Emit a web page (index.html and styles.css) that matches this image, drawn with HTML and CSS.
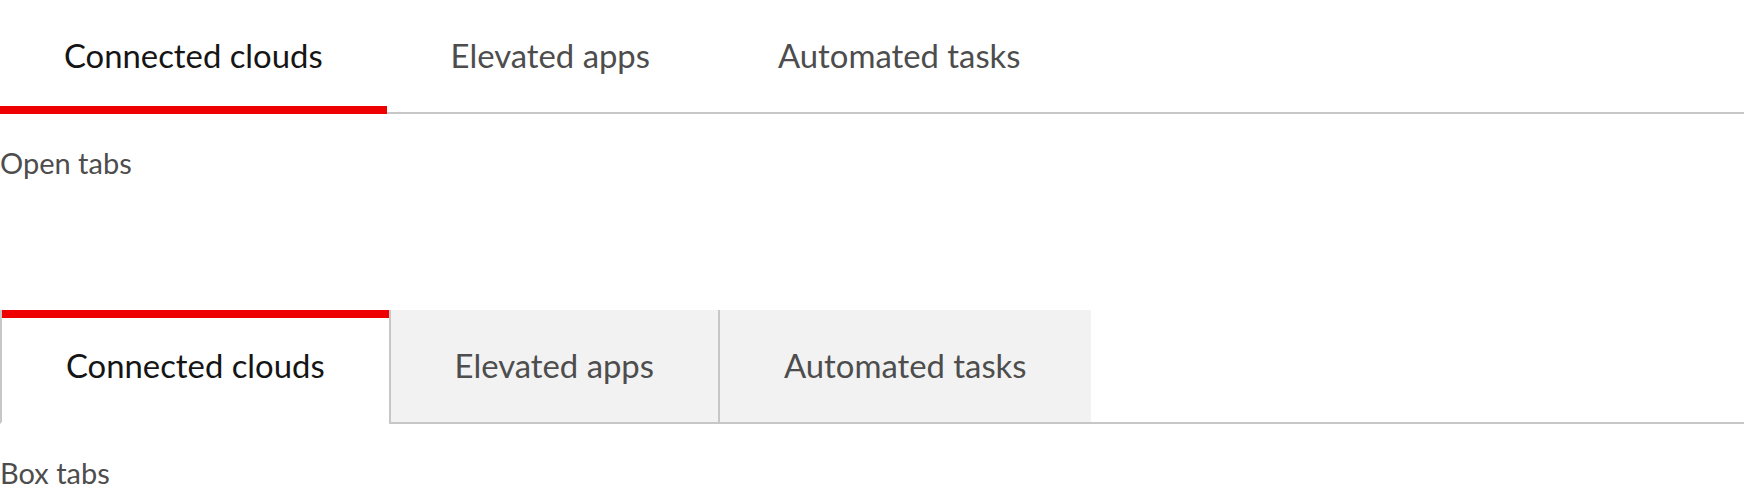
FILE: index.html
```html
<!DOCTYPE html>
<html lang="en">
<head>
<meta charset="utf-8">
<title>Tabs</title>
<link rel="stylesheet" href="styles.css">
</head>
<body>
  <section class="demo demo-open">
    <div class="tabs tabs-open" role="tablist">
      <button class="tab is-active" role="tab" aria-selected="true">Connected clouds</button>
      <button class="tab" role="tab">Elevated apps</button>
      <button class="tab" role="tab">Automated tasks</button>
    </div>
    <p class="label">Open tabs</p>
  </section>
  <section class="demo demo-box">
    <div class="tabs tabs-box" role="tablist">
      <button class="tab is-active" role="tab" aria-selected="true">Connected clouds</button>
      <button class="tab" role="tab">Elevated apps</button>
      <button class="tab tab-last" role="tab">Automated tasks</button>
      <span class="tabs-fill"></span>
    </div>
    <p class="label">Box tabs</p>
  </section>
</body>
</html>
```

FILE: styles.css
```css
* { box-sizing: border-box; }
html, body { margin: 0; padding: 0; background: #ffffff; }
body {
  font-family: "Lato", "Noto Sans", sans-serif;
  color: #151515;
  height: 492px;
  overflow: hidden;
}

.demo-box { margin-top: 126px; }

.tabs {
  display: flex;
  align-items: stretch;
}

.tab {
  position: relative;
  font-family: inherit;
  font-size: 32.85px;
  font-weight: 400;
  line-height: 48px;
  padding: 32px 64px;
  margin: 0;
  border: 0;
  background: transparent;
  color: #4d4d4d;
  white-space: nowrap;
  cursor: pointer;
}
.tab.is-active { color: #151515; }

/* open */
.tabs-open { border-bottom: 2px solid #c7c7c7; }
.tabs-open .tab.is-active::after {
  content: "";
  position: absolute;
  left: 0;
  right: 0;
  bottom: -2px;
  height: 8px;
  background: #ee0000;
}

/* box */
.tabs-box .tab {
  background: #f2f2f2;
  border-left: 2px solid #c7c7c7;
  border-bottom: 2px solid #c7c7c7;
}
.tabs-box .tab.is-active {
  background: #ffffff;
  border-bottom-color: #ffffff;
}
.tabs-box .tab.is-active::before {
  content: "";
  position: absolute;
  left: 0;
  right: 0;
  top: 0;
  height: 8px;
  background: #ee0000;
}
.tabs-fill {
  flex: 1;
  border-bottom: 2px solid #c7c7c7;
}

.label {
  margin: 28px 0 0;
  font-size: 29px;
  font-weight: 400;
  line-height: 42px;
  color: #4d4d4d;
}
```
